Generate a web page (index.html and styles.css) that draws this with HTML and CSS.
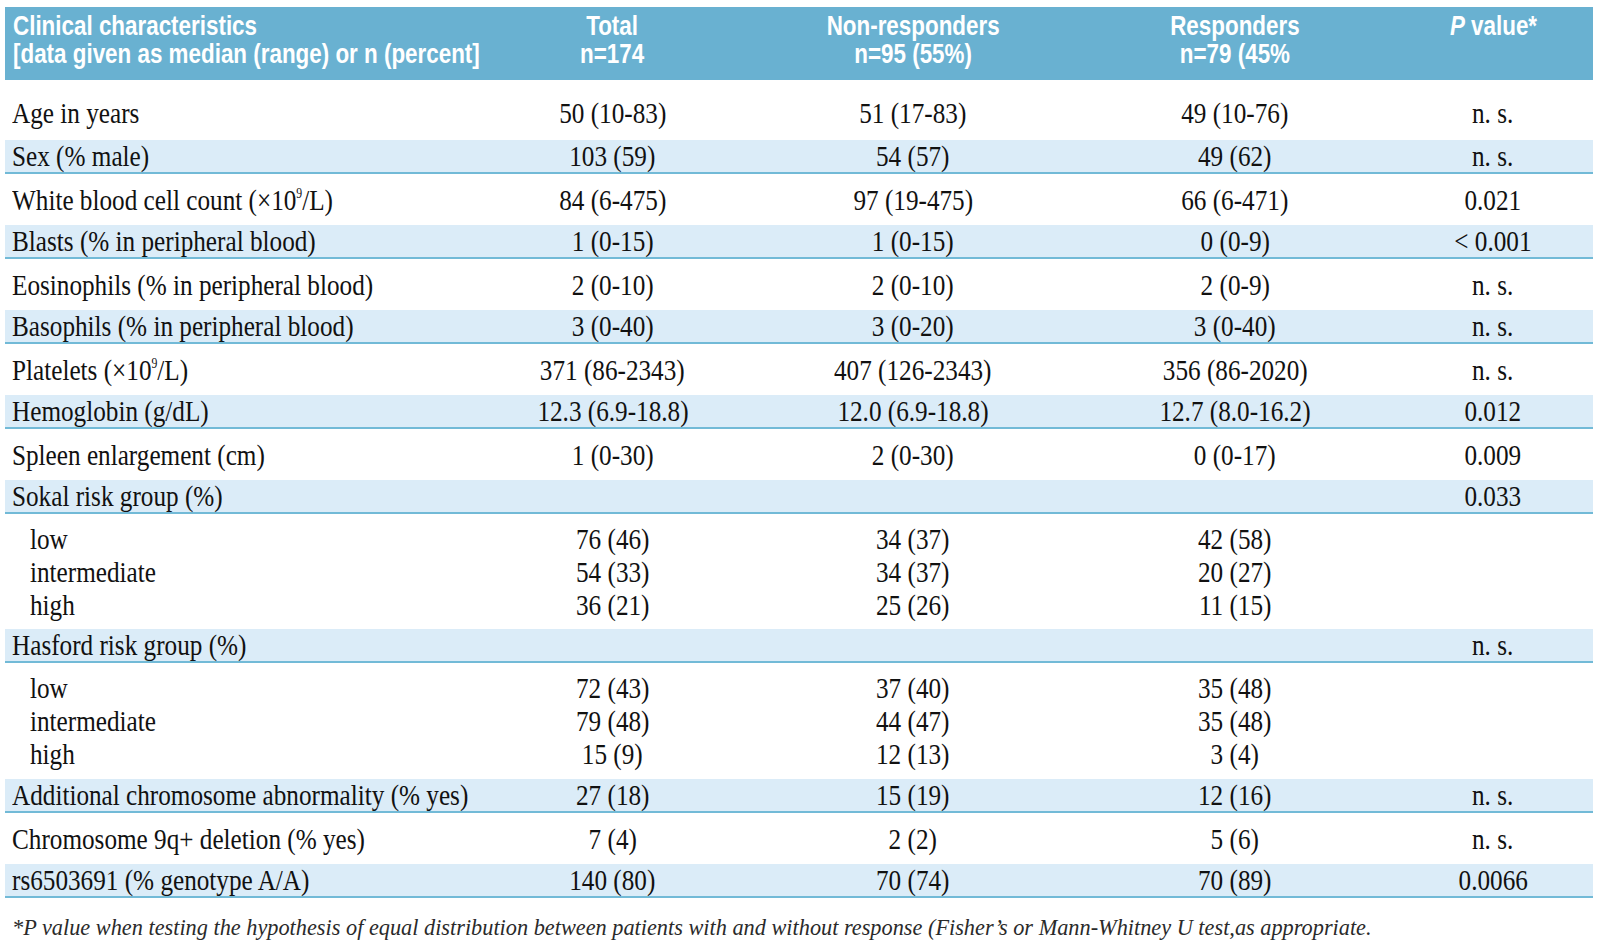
FILE: index.html
```html
<!DOCTYPE html>
<html>
<head>
<meta charset="utf-8">
<link rel="stylesheet" href="styles.css">
</head>
<body>
<div class="page">
  <div class="row head">
    <div class="cell lab"><span class="t">Clinical characteristics<br>[data given as median (range) or n (percent]</span></div>
    <div class="cell num"><span class="t">Total<br>n=174</span></div>
    <div class="cell num"><span class="t">Non-responders<br>n=95 (55%)</span></div>
    <div class="cell num"><span class="t">Responders<br>n=79 (45%</span></div>
    <div class="cell num p"><span class="t"><i>P</i> value*</span></div>
  </div>

  <div class="row first">
    <div class="cell lab"><span class="t">Age in years</span></div>
    <div class="cell num"><span class="t">50 (10-83)</span></div>
    <div class="cell num"><span class="t">51 (17-83)</span></div>
    <div class="cell num"><span class="t">49 (10-76)</span></div>
    <div class="cell num p"><span class="t">n. s.</span></div>
  </div>
  <div class="row band">
    <div class="cell lab"><span class="t">Sex (% male)</span></div>
    <div class="cell num"><span class="t">103 (59)</span></div>
    <div class="cell num"><span class="t">54 (57)</span></div>
    <div class="cell num"><span class="t">49 (62)</span></div>
    <div class="cell num p"><span class="t">n. s.</span></div>
  </div>
  <div class="row">
    <div class="cell lab"><span class="t">White blood cell count (×10<sup>9</sup>/L)</span></div>
    <div class="cell num"><span class="t">84 (6-475)</span></div>
    <div class="cell num"><span class="t">97 (19-475)</span></div>
    <div class="cell num"><span class="t">66 (6-471)</span></div>
    <div class="cell num p"><span class="t">0.021</span></div>
  </div>
  <div class="row band">
    <div class="cell lab"><span class="t">Blasts (% in peripheral blood)</span></div>
    <div class="cell num"><span class="t">1 (0-15)</span></div>
    <div class="cell num"><span class="t">1 (0-15)</span></div>
    <div class="cell num"><span class="t">0 (0-9)</span></div>
    <div class="cell num p"><span class="t">&lt; 0.001</span></div>
  </div>
  <div class="row">
    <div class="cell lab"><span class="t">Eosinophils (% in peripheral blood)</span></div>
    <div class="cell num"><span class="t">2 (0-10)</span></div>
    <div class="cell num"><span class="t">2 (0-10)</span></div>
    <div class="cell num"><span class="t">2 (0-9)</span></div>
    <div class="cell num p"><span class="t">n. s.</span></div>
  </div>
  <div class="row band">
    <div class="cell lab"><span class="t">Basophils (% in peripheral blood)</span></div>
    <div class="cell num"><span class="t">3 (0-40)</span></div>
    <div class="cell num"><span class="t">3 (0-20)</span></div>
    <div class="cell num"><span class="t">3 (0-40)</span></div>
    <div class="cell num p"><span class="t">n. s.</span></div>
  </div>
  <div class="row">
    <div class="cell lab"><span class="t">Platelets (×10<sup>9</sup>/L)</span></div>
    <div class="cell num"><span class="t">371 (86-2343)</span></div>
    <div class="cell num"><span class="t">407 (126-2343)</span></div>
    <div class="cell num"><span class="t">356 (86-2020)</span></div>
    <div class="cell num p"><span class="t">n. s.</span></div>
  </div>
  <div class="row band">
    <div class="cell lab"><span class="t">Hemoglobin (g/dL)</span></div>
    <div class="cell num"><span class="t">12.3 (6.9-18.8)</span></div>
    <div class="cell num"><span class="t">12.0 (6.9-18.8)</span></div>
    <div class="cell num"><span class="t">12.7 (8.0-16.2)</span></div>
    <div class="cell num p"><span class="t">0.012</span></div>
  </div>
  <div class="row">
    <div class="cell lab"><span class="t">Spleen enlargement (cm)</span></div>
    <div class="cell num"><span class="t">1 (0-30)</span></div>
    <div class="cell num"><span class="t">2 (0-30)</span></div>
    <div class="cell num"><span class="t">0 (0-17)</span></div>
    <div class="cell num p"><span class="t">0.009</span></div>
  </div>
  <div class="row band">
    <div class="cell lab"><span class="t">Sokal risk group (%)</span></div>
    <div class="cell num"></div>
    <div class="cell num"></div>
    <div class="cell num"></div>
    <div class="cell num p"><span class="t">0.033</span></div>
  </div>
  <div class="row sub sub-first">
    <div class="cell lab ind"><span class="t">low</span></div>
    <div class="cell num"><span class="t">76 (46)</span></div>
    <div class="cell num"><span class="t">34 (37)</span></div>
    <div class="cell num"><span class="t">42 (58)</span></div>
    <div class="cell num p"></div>
  </div>
  <div class="row sub">
    <div class="cell lab ind"><span class="t">intermediate</span></div>
    <div class="cell num"><span class="t">54 (33)</span></div>
    <div class="cell num"><span class="t">34 (37)</span></div>
    <div class="cell num"><span class="t">20 (27)</span></div>
    <div class="cell num p"></div>
  </div>
  <div class="row sub sub-last">
    <div class="cell lab ind"><span class="t">high</span></div>
    <div class="cell num"><span class="t">36 (21)</span></div>
    <div class="cell num"><span class="t">25 (26)</span></div>
    <div class="cell num"><span class="t">11 (15)</span></div>
    <div class="cell num p"></div>
  </div>
  <div class="row band">
    <div class="cell lab"><span class="t">Hasford risk group (%)</span></div>
    <div class="cell num"></div>
    <div class="cell num"></div>
    <div class="cell num"></div>
    <div class="cell num p"><span class="t">n. s.</span></div>
  </div>
  <div class="row sub sub-first">
    <div class="cell lab ind"><span class="t">low</span></div>
    <div class="cell num"><span class="t">72 (43)</span></div>
    <div class="cell num"><span class="t">37 (40)</span></div>
    <div class="cell num"><span class="t">35 (48)</span></div>
    <div class="cell num p"></div>
  </div>
  <div class="row sub">
    <div class="cell lab ind"><span class="t">intermediate</span></div>
    <div class="cell num"><span class="t">79 (48)</span></div>
    <div class="cell num"><span class="t">44 (47)</span></div>
    <div class="cell num"><span class="t">35 (48)</span></div>
    <div class="cell num p"></div>
  </div>
  <div class="row sub sub-last sub-last2">
    <div class="cell lab ind"><span class="t">high</span></div>
    <div class="cell num"><span class="t">15 (9)</span></div>
    <div class="cell num"><span class="t">12 (13)</span></div>
    <div class="cell num"><span class="t">3 (4)</span></div>
    <div class="cell num p"></div>
  </div>
  <div class="row band">
    <div class="cell lab"><span class="t">Additional chromosome abnormality (% yes)</span></div>
    <div class="cell num"><span class="t">27 (18)</span></div>
    <div class="cell num"><span class="t">15 (19)</span></div>
    <div class="cell num"><span class="t">12 (16)</span></div>
    <div class="cell num p"><span class="t">n. s.</span></div>
  </div>
  <div class="row">
    <div class="cell lab"><span class="t">Chromosome 9q+ deletion (% yes)</span></div>
    <div class="cell num"><span class="t">7 (4)</span></div>
    <div class="cell num"><span class="t">2 (2)</span></div>
    <div class="cell num"><span class="t">5 (6)</span></div>
    <div class="cell num p"><span class="t">n. s.</span></div>
  </div>
  <div class="row band">
    <div class="cell lab"><span class="t">rs6503691 (% genotype A/A)</span></div>
    <div class="cell num"><span class="t">140 (80)</span></div>
    <div class="cell num"><span class="t">70 (74)</span></div>
    <div class="cell num"><span class="t">70 (89)</span></div>
    <div class="cell num p"><span class="t">0.0066</span></div>
  </div>

  <p class="note">*P value when testing the hypothesis of equal distribution between patients with and without response (Fisher’s or Mann-Whitney U test,as appropriate.</p>
</div>
</body>
</html>
```

FILE: styles.css
```css
html, body {
  margin: 0;
  padding: 0;
  background: #ffffff;
}

.page {
  padding: 7px 8px 0 5px;
  width: 1588px;
  font-family: "Liberation Serif", "Times New Roman", serif;
  color: #111111;
}

.row {
  display: grid;
  grid-template-columns: 465px 285px 316px 328px 194px;
  align-items: center;
  height: 51px;
  box-sizing: border-box;
  font-size: 30px;
  line-height: 30px;
}

.cell {
  white-space: nowrap;
}

.cell .t {
  display: inline-block;
  transform: scaleX(0.84);
}

.lab {
  padding-left: 7px;
}

.lab .t {
  transform-origin: left center;
}

.num {
  text-align: center;
}

.num .t {
  transform-origin: center center;
}

.p {
  padding-right: 6px;
}

sup {
  font-size: 14px;
  vertical-align: 12px;
  line-height: 0;
}

/* header band */
.head {
  height: 73px;
  align-items: start;
  background: #69b1d1;
  color: #ffffff;
  font-family: "Liberation Sans", Arial, sans-serif;
  font-weight: bold;
  font-size: 28px;
  line-height: 28px;
  padding-top: 5px;
}

.head .lab {
  padding-left: 8px;
}

.head .cell .t {
  transform: scaleX(0.8);
}

.head i {
  font-style: italic;
}

.first {
  height: 60px;
  padding-top: 6px;
}

.band {
  height: 34px;
  background: #dbecf8;
  border-bottom: 2px solid #72bad7;
}

.sub {
  height: 33px;
}

.sub-first {
  height: 41px;
  padding-top: 8px;
}

.sub-last {
  height: 41px;
  padding-bottom: 8px;
}

.sub-last2 {
  height: 42px;
  padding-bottom: 9px;
}

.ind {
  padding-left: 25px;
}

.note {
  margin: 18px 0 0 0;
  padding-left: 7px;
  font-style: italic;
  font-size: 22.3px;
  line-height: 24px;
  color: #2a2a2a;
  white-space: nowrap;
}
```
